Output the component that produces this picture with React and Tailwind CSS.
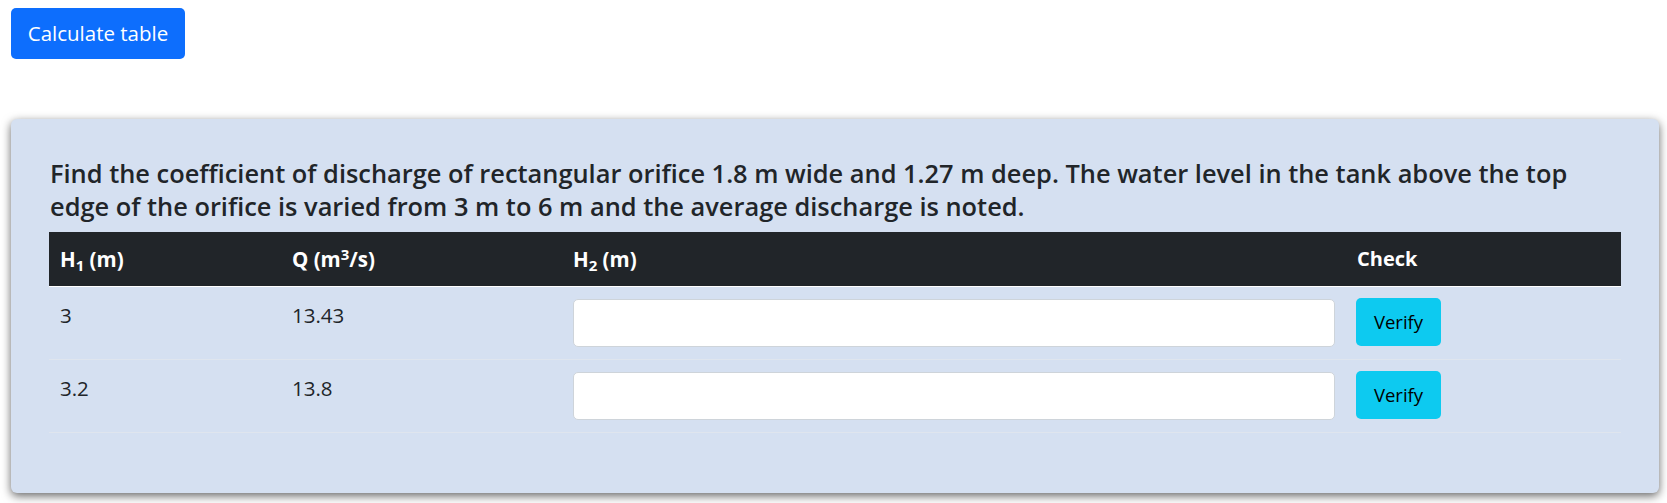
import React from "react";

const rows = [
  { h1: "3", q: "13.43" },
  { h1: "3.2", q: "13.8" },
];

export default function App() {
  return (
    <div
      className="w-[1667px] min-h-[503px] bg-white pl-[11px] pr-[8px] pt-[8px] text-[#212529]"
      style={{ fontFamily: '"Open Sans", "Noto Sans", sans-serif' }}
    >
      <button className="h-[51px] w-[174px] rounded-[5px] bg-[#0d6efd] text-[20.5px] text-white">
        Calculate table
      </button>

      <div className="mt-[60px] h-[374px] rounded-[6px] bg-[#d5e0f1] px-[38px] pt-[38px] shadow-[0_3px_10px_rgba(0,0,0,0.6)]">
        <h4 className="text-[25.4px] font-semibold leading-[33px] pl-[1px]">
          Find the coefficient of discharge of rectangular orifice 1.8 m wide and 1.27 m deep. The water level in the tank above the top
          <br />
          edge of the orifice is varied from 3 m to 6 m and the average discharge is noted.
        </h4>

        <table className="mt-[9px] w-full table-fixed border-collapse">
          <colgroup>
            <col className="w-[232px]" />
            <col className="w-[281px]" />
            <col className="w-[784px]" />
            <col className="w-[275px]" />
          </colgroup>
          <thead>
            <tr className="bg-[#212529] text-white border-b border-white">
              <th className="px-[11px] py-[11px] text-left text-[20.5px] font-bold leading-[32px]">
                H<sub className="text-[15px]">1</sub> (m)
              </th>
              <th className="px-[11px] py-[11px] text-left text-[20.5px] font-bold leading-[32px]">
                Q (m<sup className="text-[15px]">3</sup>/s)
              </th>
              <th className="px-[11px] py-[11px] text-left text-[20.5px] font-bold leading-[32px]">
                H<sub className="text-[15px]">2</sub> (m)
              </th>
              <th className="px-[11px] py-[11px] text-left text-[20px] font-bold leading-[32px]">
                Check
              </th>
            </tr>
          </thead>
          <tbody>
            {rows.map((r) => (
              <tr key={r.h1} className="border-b border-[#dfe5ee]">
                <td className="px-[11px] pt-[12px] pb-[12px] align-top text-[20.5px] leading-[32px]">
                  {r.h1}
                </td>
                <td className="px-[11px] pt-[12px] pb-[12px] align-top text-[20.5px] leading-[32px]">
                  {r.q}
                </td>
                <td className="px-[11px] pt-[12px] pb-[12px] align-top">
                  <input
                    type="text"
                    className="block h-[48px] w-full rounded-[5px] border border-[#ced4da] bg-white px-3 outline-none"
                  />
                </td>
                <td className="px-[10px] pt-[11px] pb-[12px] align-top">
                  <button className="h-[48px] w-[85px] rounded-[5px] bg-[#0dcaf0] text-[18.5px] text-black">
                    Verify
                  </button>
                </td>
              </tr>
            ))}
          </tbody>
        </table>
      </div>
    </div>
  );
}
